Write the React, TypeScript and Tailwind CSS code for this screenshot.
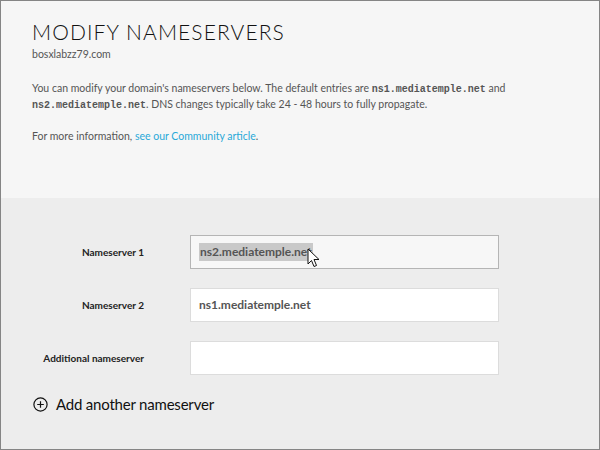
const body = { fontFamily: "Lato, 'Open Sans', sans-serif" };
const mono = { fontFamily: "'Liberation Mono', 'DejaVu Sans Mono', monospace" };

const Row = ({ label, children, active }: { label: string; children?: React.ReactNode; active?: boolean }) => (
  <div className="flex items-center">
    <div className="w-[112px] text-right text-[10px] font-bold text-[#222]">{label}</div>
    <div
      className={
        "ml-[46px] w-[309px] h-[34px] flex items-center px-[8px] text-[12px] font-bold text-[#555] " +
        (active ? "bg-[#f7f7f7] border border-[#b5b5b5]" : "bg-white border border-[#dcdcdc]")
      }
    >
      {children}
    </div>
  </div>
);

export default function App() {
  return (
    <div className="w-[600px] h-[450px] border border-[#858585] flex flex-col" style={body}>
      <div className="h-[197px] bg-[#f6f6f6] pl-[31px] pt-[19px]">
        <h1 className="text-[21px] font-light tracking-[1.1px] text-[#111] leading-[24px]">MODIFY NAMESERVERS</h1>
        <p className="text-[10.5px] text-[#555] mt-[3px]">bosxlabzz79.com</p>
        <p className="text-[10.5px] text-[#555] leading-[15px] mt-[18px] w-[510px]">
          You can modify your domain's nameservers below. The default entries are{" "}
          <span className="text-[10px] font-bold text-[#555]" style={mono}>ns1.mediatemple.net</span> and
          <br />
          <span className="text-[10px] font-bold text-[#555]" style={mono}>ns2.mediatemple.net</span>. DNS changes typically take 24 - 48 hours to fully propagate.
        </p>
        <p className="text-[10.5px] text-[#555] mt-[16px]">
          For more information, <span className="text-[#29a9d8]">see our Community article</span>.
        </p>
      </div>
      <div className="flex-1 bg-[#ededed] pt-[37px] pl-[31px]">
        <div className="flex flex-col gap-[19px]">
          <Row label="Nameserver 1" active>
            <span className="relative bg-[#c9c9c9] px-[1px]">
              ns2.mediatemple.net
              <svg className="absolute left-[108px] top-[5px]" width="13" height="20" viewBox="0 0 13 20">
                <path d="M1 1 L1 16 L4.5 12.5 L7 18.5 L9.5 17.5 L7 11.5 L12 11.5 Z" fill="#fff" stroke="#111" strokeWidth="1" strokeLinejoin="round" />
              </svg>
            </span>
          </Row>
          <Row label="Nameserver 2">ns1.mediatemple.net</Row>
          <Row label="Additional nameserver" />
        </div>
        <div className="flex items-center mt-[18px] ml-[1px]">
          <svg width="15" height="15" viewBox="0 0 15 15">
            <circle cx="7.5" cy="7.5" r="6.6" fill="none" stroke="#111" strokeWidth="1.2" />
            <path d="M7.5 4.2 V10.8 M4.2 7.5 H10.8" stroke="#111" strokeWidth="1.2" />
          </svg>
          <span className="ml-[8px] text-[15px] tracking-[-0.2px] text-[#111]">Add another nameserver</span>
        </div>
      </div>
    </div>
  );
}
